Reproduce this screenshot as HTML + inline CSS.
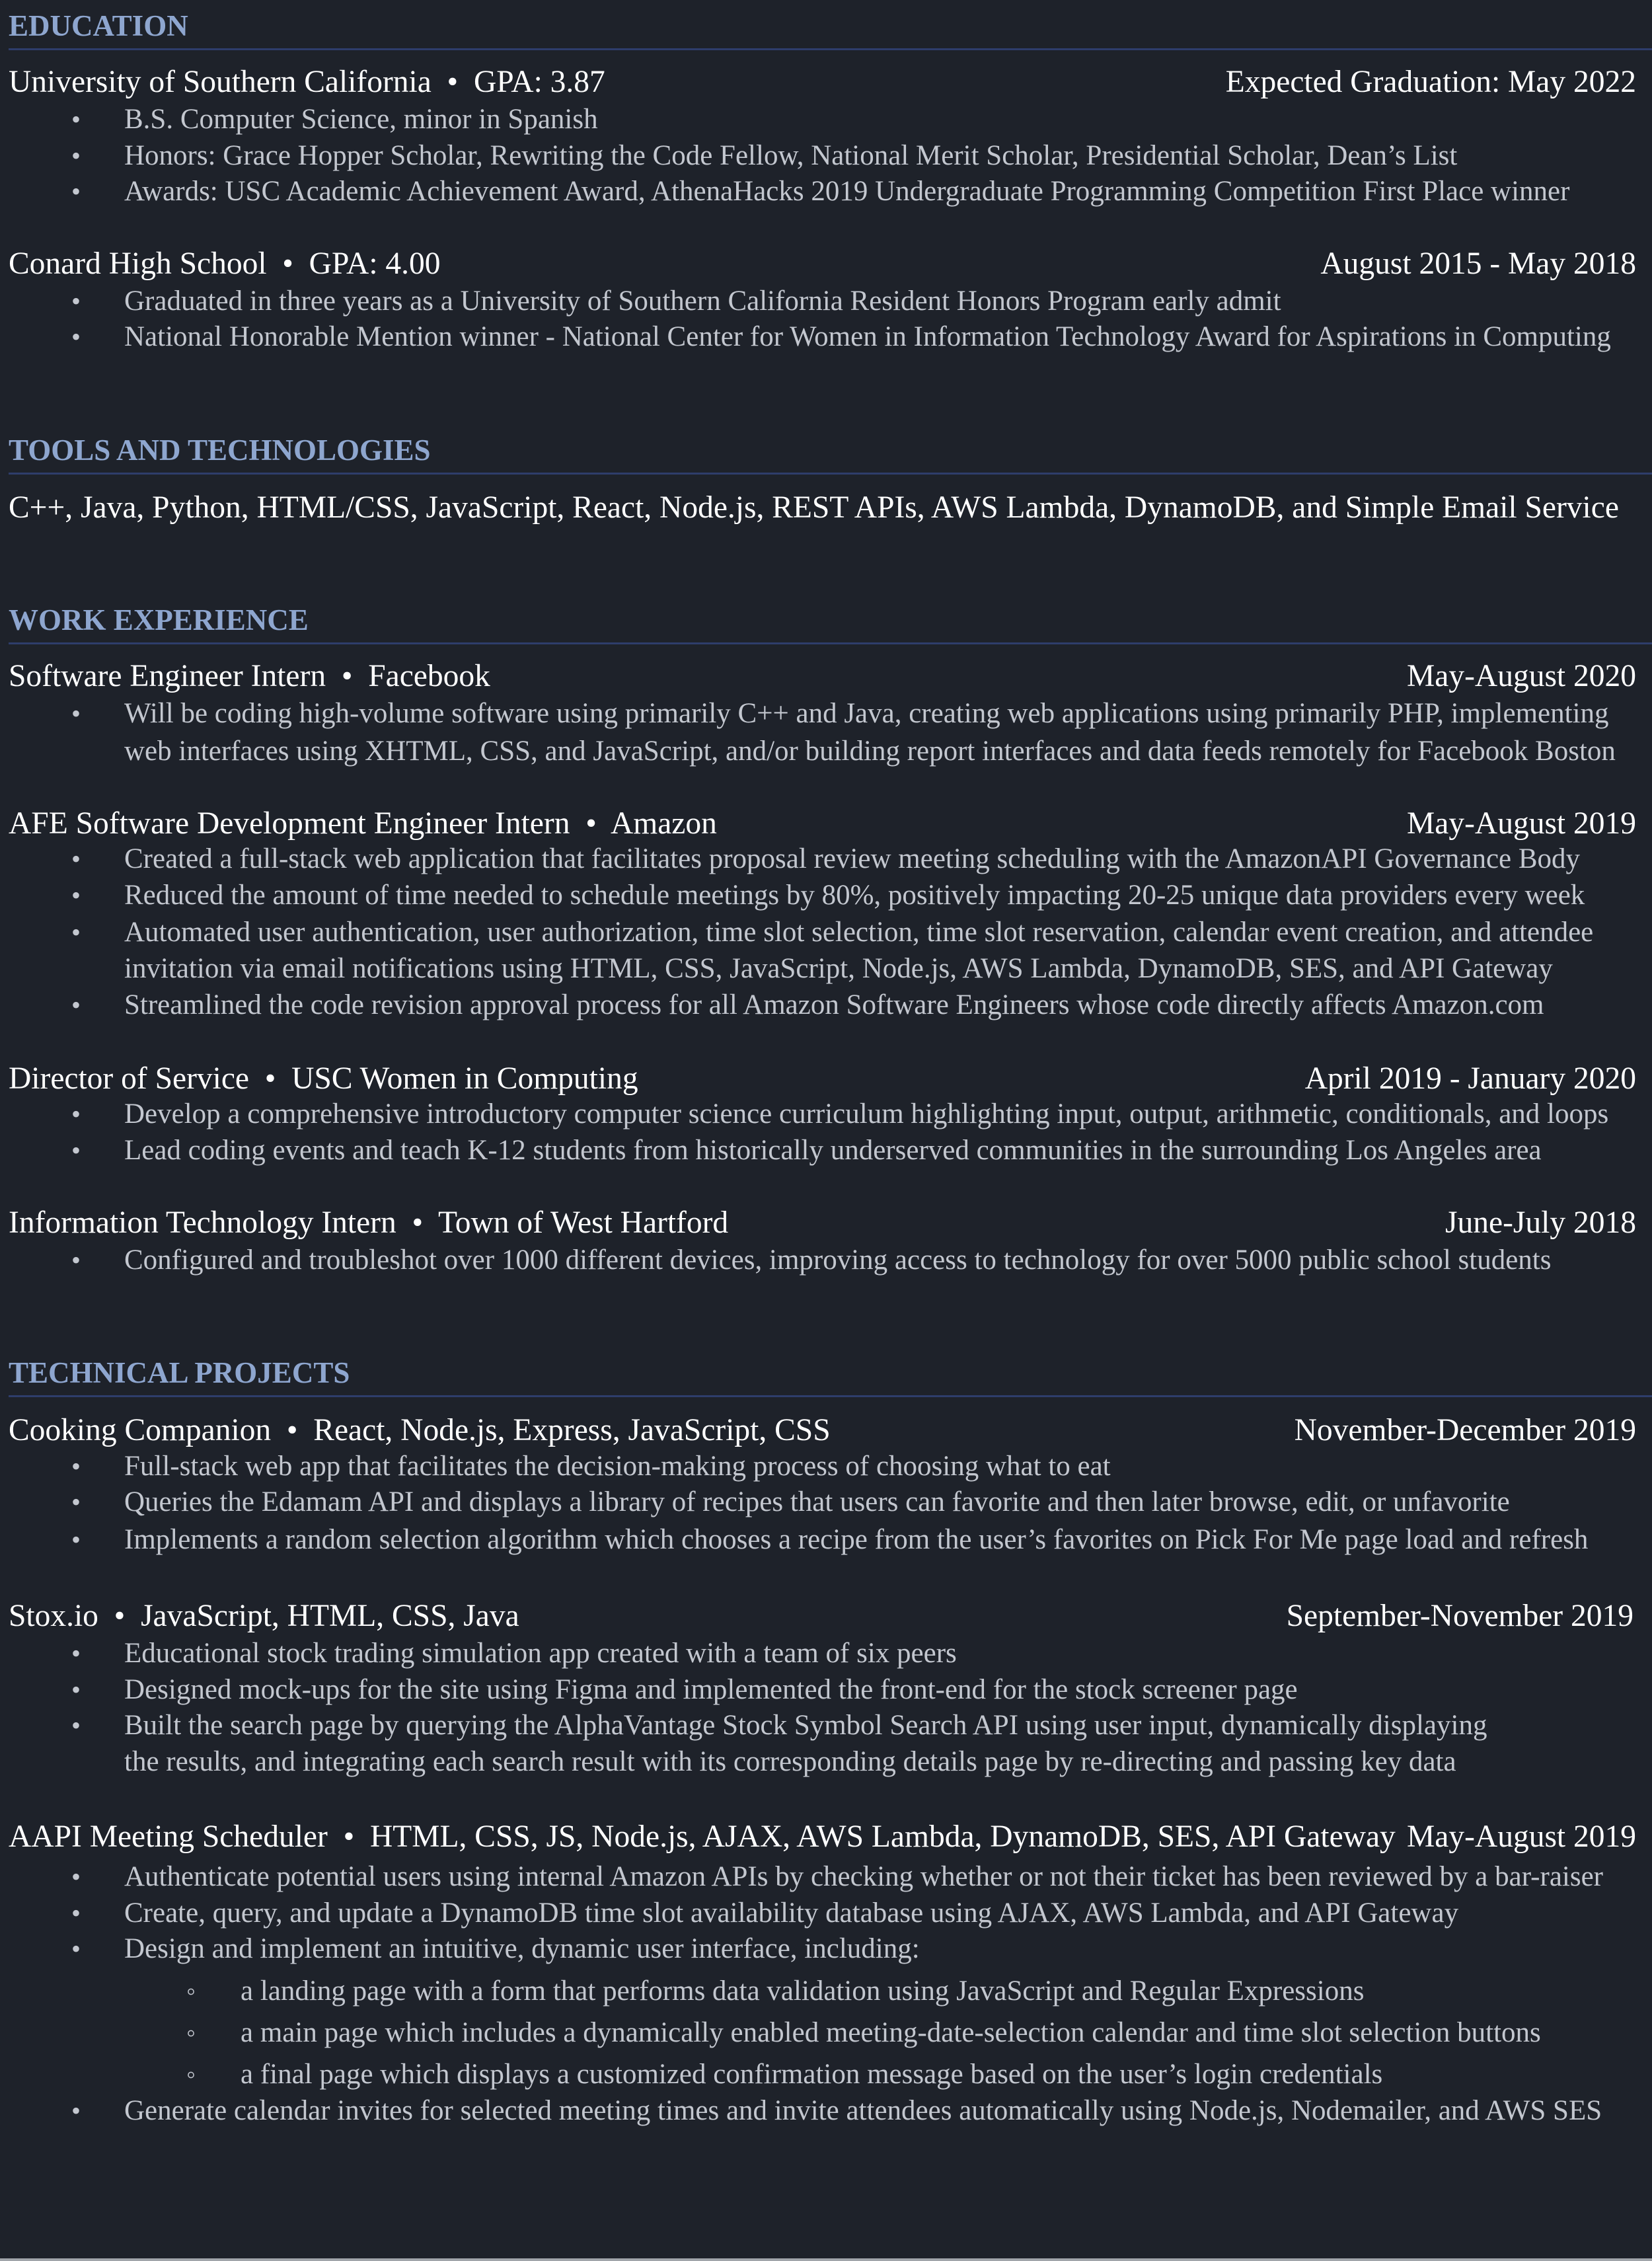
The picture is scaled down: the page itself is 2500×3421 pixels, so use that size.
<!DOCTYPE html>
<html><head><meta charset="utf-8"><style>
html,body{margin:0;padding:0}
body{width:2500px;height:3421px;background:#1e222a;position:relative;overflow:hidden;font-family:"Liberation Serif",serif}
.l{position:absolute;line-height:56px;height:56px;white-space:nowrap}
.h{left:13px;color:#fff;font-size:47.5px}
.r{right:24px;color:#fff;font-size:47.5px;text-align:right}
.b{left:188px;color:#c3c7cf;font-size:43px}
.b::before{content:"•";position:absolute;left:-80px;font-size:40px}
.c{left:188px;color:#c3c7cf;font-size:43px}
.s{left:364px;color:#c3c7cf;font-size:43px}
.s::before{content:"◦";position:absolute;left:-82px;font-size:40px}
.sec{position:absolute;left:13px;color:#8ea6cf;font-size:45px;font-weight:bold;line-height:56px;height:56px}
.rule{position:absolute;left:13px;right:0;height:3px;background:#2e3d6b}
.t{left:13px;color:#fff;font-size:47.5px}
.bottom{position:absolute;left:0;right:0;top:3417px;height:4px;background:#a0a4aa}
</style></head><body>
<div class="sec" style="top:11px">EDUCATION</div><div class="rule" style="top:73px"></div>
<div class="l h" style="top:96px">University of Southern California &nbsp;•&nbsp; GPA: 3.87</div><div class="l r" style="top:96px">Expected Graduation: May 2022</div>
<div class="l b" style="top:153px">B.S. Computer Science, minor in Spanish</div>
<div class="l b" style="top:208px">Honors: Grace Hopper Scholar, Rewriting the Code Fellow, National Merit Scholar, Presidential Scholar, Dean’s List</div>
<div class="l b" style="top:262px">Awards: USC Academic Achievement Award, AthenaHacks 2019 Undergraduate Programming Competition First Place winner</div>
<div class="l h" style="top:371px">Conard High School &nbsp;•&nbsp; GPA: 4.00</div><div class="l r" style="top:371px">August 2015 - May 2018</div>
<div class="l b" style="top:428px">Graduated in three years as a University of Southern California Resident Honors Program early admit</div>
<div class="l b" style="top:482px">National Honorable Mention winner - National Center for Women in Information Technology Award for Aspirations in Computing</div>

<div class="sec" style="top:653px">TOOLS AND TECHNOLOGIES</div><div class="rule" style="top:715px"></div>
<div class="l t" style="top:740px">C++, Java, Python, HTML/CSS, JavaScript, React, Node.js, REST APIs, AWS Lambda, DynamoDB, and Simple Email Service</div>

<div class="sec" style="top:910px">WORK EXPERIENCE</div><div class="rule" style="top:972px"></div>
<div class="l h" style="top:995px">Software Engineer Intern &nbsp;•&nbsp; Facebook</div><div class="l r" style="top:995px">May-August 2020</div>
<div class="l b" style="top:1052px">Will be coding high-volume software using primarily C++ and Java, creating web applications using primarily PHP, implementing</div>
<div class="l c" style="top:1109px;">web interfaces using XHTML, CSS, and JavaScript, and/or building report interfaces and data feeds remotely for Facebook Boston</div>
<div class="l h" style="top:1218px">AFE Software Development Engineer Intern &nbsp;•&nbsp; Amazon</div><div class="l r" style="top:1218px">May-August 2019</div>
<div class="l b" style="top:1272px">Created a full-stack web application that facilitates proposal review meeting scheduling with the AmazonAPI Governance Body</div>
<div class="l b" style="top:1327px">Reduced the amount of time needed to schedule meetings by 80%, positively impacting 20-25 unique data providers every week</div>
<div class="l b" style="top:1383px">Automated user authentication, user authorization, time slot selection, time slot reservation, calendar event creation, and attendee</div>
<div class="l c" style="top:1438px">invitation via email notifications using HTML, CSS, JavaScript, Node.js, AWS Lambda, DynamoDB, SES, and API Gateway</div>
<div class="l b" style="top:1493px">Streamlined the code revision approval process for all Amazon Software Engineers whose code directly affects Amazon.com</div>
<div class="l h" style="top:1604px">Director of Service &nbsp;•&nbsp; USC Women in Computing</div><div class="l r" style="top:1604px">April 2019 - January 2020</div>
<div class="l b" style="top:1658px">Develop a comprehensive introductory computer science curriculum highlighting input, output, arithmetic, conditionals, and loops</div>
<div class="l b" style="top:1713px">Lead coding events and teach K-12 students from historically underserved communities in the surrounding Los Angeles area</div>
<div class="l h" style="top:1822px">Information Technology Intern &nbsp;•&nbsp; Town of West Hartford</div><div class="l r" style="top:1822px">June-July 2018</div>
<div class="l b" style="top:1879px">Configured and troubleshot over 1000 different devices, improving access to technology for over 5000 public school students</div>

<div class="sec" style="top:2049px">TECHNICAL PROJECTS</div><div class="rule" style="top:2111px"></div>
<div class="l h" style="top:2136px">Cooking Companion &nbsp;•&nbsp; React, Node.js, Express, JavaScript, CSS</div><div class="l r" style="top:2136px">November-December 2019</div>
<div class="l b" style="top:2191px">Full-stack web app that facilitates the decision-making process of choosing what to eat</div>
<div class="l b" style="top:2245px">Queries the Edamam API and displays a library of recipes that users can favorite and then later browse, edit, or unfavorite</div>
<div class="l b" style="top:2302px">Implements a random selection algorithm which chooses a recipe from the user’s favorites on Pick For Me page load and refresh</div>
<div class="l h" style="top:2417px">Stox.io &nbsp;•&nbsp; JavaScript, HTML, CSS, Java</div><div class="l r" style="top:2417px;right:28px">September-November 2019</div>
<div class="l b" style="top:2474px">Educational stock trading simulation app created with a team of six peers</div>
<div class="l b" style="top:2529px">Designed mock-ups for the site using Figma and implemented the front-end for the stock screener page</div>
<div class="l b" style="top:2583px">Built the search page by querying the AlphaVantage Stock Symbol Search API using user input, dynamically displaying</div>
<div class="l c" style="top:2638px">the results, and integrating each search result with its corresponding details page by re-directing and passing key data</div>
<div class="l h" style="top:2751px">AAPI Meeting Scheduler &nbsp;•&nbsp; HTML, CSS, JS, Node.js, AJAX, AWS Lambda, DynamoDB, SES, API Gateway</div><div class="l r" style="top:2751px">May-August 2019</div>
<div class="l b" style="top:2812px">Authenticate potential users using internal Amazon APIs by checking whether or not their ticket has been reviewed by a bar-raiser</div>
<div class="l b" style="top:2867px">Create, query, and update a DynamoDB time slot availability database using AJAX, AWS Lambda, and API Gateway</div>
<div class="l b" style="top:2921px">Design and implement an intuitive, dynamic user interface, including:</div>
<div class="l s" style="top:2985px">a landing page with a form that performs data validation using JavaScript and Regular Expressions</div>
<div class="l s" style="top:3048px">a main page which includes a dynamically enabled meeting-date-selection calendar and time slot selection buttons</div>
<div class="l s" style="top:3111px">a final page which displays a customized confirmation message based on the user’s login credentials</div>
<div class="l b" style="top:3166px">Generate calendar invites for selected meeting times and invite attendees automatically using Node.js, Nodemailer, and AWS SES</div>
<div class="bottom"></div>
</body></html>
